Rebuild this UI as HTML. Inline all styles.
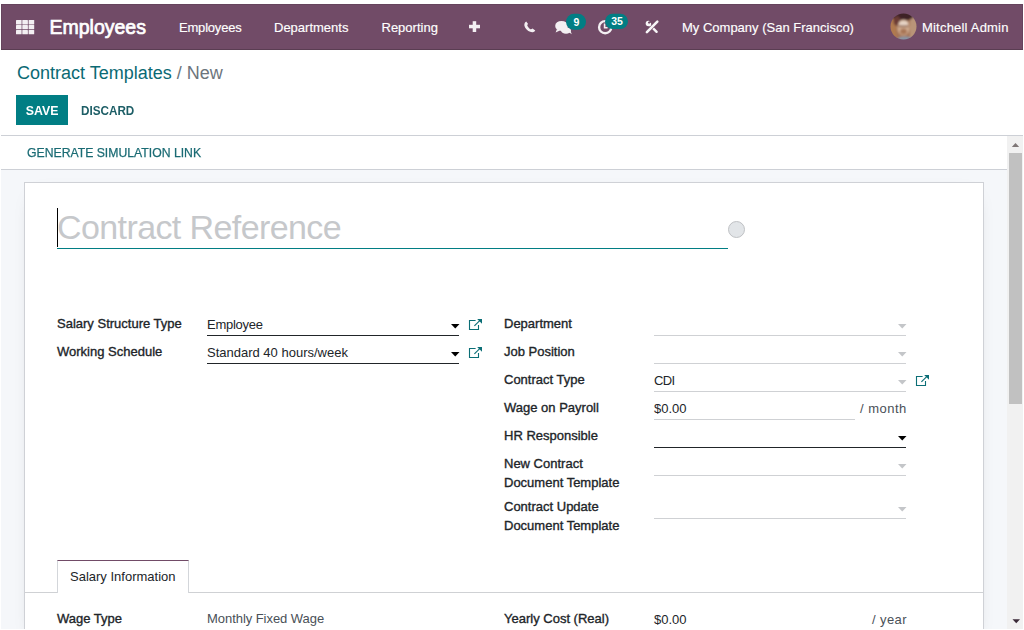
<!DOCTYPE html>
<html><head><meta charset="utf-8">
<style>
*{box-sizing:border-box;margin:0;padding:0}
html,body{width:1024px;height:630px;overflow:hidden;background:#fff;font-family:"Liberation Sans",sans-serif;font-size:13px;color:#212529}
.abs{position:absolute;white-space:nowrap}
#nav{position:absolute;left:1px;top:4px;width:1022px;height:46px;background:#714b67;border-bottom:1px solid #5a3d52;box-shadow:inset 1px 0 0 #66445d, inset -1px 0 0 #66445d, inset 0 1px 0 #66445d}
.nt{color:#fff;font-size:13px;line-height:15px;-webkit-text-stroke:0.15px #fff}
#cp{position:absolute;left:1px;top:50px;width:1022px;height:86px;background:#fff;border-bottom:1px solid #cdd0d6}
#content{position:absolute;left:1px;top:136px;width:1022px;height:493px;background:#f5f7fa;overflow:hidden}
#sb{position:absolute;left:0;top:0;width:1006px;height:34px;background:#fff;border-bottom:1px solid #cdd0d6}
#scroll{position:absolute;left:1006px;top:0;width:16px;height:493px;background:#f1f1f1}
#thumb{position:absolute;left:2px;top:17px;width:13px;height:251px;background:#c1c1c1}
#sheet{position:absolute;left:23px;top:46px;width:960px;height:460px;background:#fff;border:1px solid #cfd1d6;box-shadow:0 5px 20px -15px rgba(0,0,0,.4)}
.lbl{font-weight:400;color:#212529;font-size:13px;-webkit-text-stroke:0.35px #212529}
.val{color:#212529;font-size:13px}
.line{position:absolute;height:1px}
</style></head><body>
<div id="nav">
  <!-- grid icon -->
  <svg class="abs" style="left:15px;top:15.8px" width="19" height="15" viewBox="0 0 19 15"><g fill="#f3eff2"><rect x="0.0" y="0.00" width="5.6" height="4.4" rx="0.5"/><rect x="6.3" y="0.00" width="5.6" height="4.4" rx="0.5"/><rect x="12.6" y="0.00" width="5.6" height="4.4" rx="0.5"/><rect x="0.0" y="4.95" width="5.6" height="4.4" rx="0.5"/><rect x="6.3" y="4.95" width="5.6" height="4.4" rx="0.5"/><rect x="12.6" y="4.95" width="5.6" height="4.4" rx="0.5"/><rect x="0.0" y="9.90" width="5.6" height="4.4" rx="0.5"/><rect x="6.3" y="9.90" width="5.6" height="4.4" rx="0.5"/><rect x="12.6" y="9.90" width="5.6" height="4.4" rx="0.5"/></g></svg>
  <div class="abs nt" style="left:48.5px;top:12.2px;font-size:19.5px;font-weight:400;line-height:22px;letter-spacing:0px;-webkit-text-stroke:0.7px #fff">Employees</div>
  <div class="abs nt" style="left:178px;top:16px;letter-spacing:-0.2px">Employees</div>
  <div class="abs nt" style="left:273px;top:16px">Departments</div>
  <div class="abs nt" style="left:380.5px;top:16px;letter-spacing:0px">Reporting</div>
    <div class="abs nt" style="left:681px;top:16px">My Company (San Francisco)</div>
  <svg class="abs" style="left:889px;top:9px" width="27" height="27" viewBox="0 0 27 27">
    <defs><clipPath id="av"><circle cx="13.5" cy="13.5" r="13"/></clipPath><filter id="bl" x="-20%" y="-20%" width="140%" height="140%"><feGaussianBlur stdDeviation="0.9"/></filter></defs>
    <g clip-path="url(#av)"><g filter="url(#bl)">
      <rect x="-2" y="-2" width="31" height="31" fill="#a57556"/>
      <rect x="-2" y="-2" width="8" height="31" fill="#b07a50"/>
      <rect x="20" y="-2" width="9" height="31" fill="#b99478"/>
      <ellipse cx="12.5" cy="3" rx="11" ry="5" fill="#3c2428"/>
      <ellipse cx="7" cy="8" rx="3.5" ry="5" fill="#6a3a34"/>
      <ellipse cx="13.5" cy="14.5" rx="6" ry="8" fill="#d2ae92"/>
      <ellipse cx="13.5" cy="10.5" rx="4.5" ry="2.5" fill="#e6d4c6"/>
      <rect x="8.5" y="12.5" width="10" height="1.6" fill="#8a6050"/>
      <ellipse cx="13.5" cy="18.5" rx="3.5" ry="3" fill="#a87656"/>
      <ellipse cx="15" cy="27" rx="8" ry="3.5" fill="#8896a6"/>
    </g></g>
  </svg>
  <div class="abs nt" style="left:921px;top:16px;letter-spacing:0.2px">Mitchell Admin</div>
</div>

<!-- nav icons (page coords) -->
<svg class="abs" style="left:0;top:0" width="1024" height="50" viewBox="0 0 1024 50">
  <g fill="#f3eff2">
    <rect x="469" y="24.8" width="11" height="3.5"/>
    <rect x="472.7" y="21.2" width="3.5" height="10.8"/>
  </g>
  <!-- phone -->
  <path d="M526.2 21.6 C524.3 22.8 523.6 25.2 525.2 27.8 C527 30.6 529.8 32.4 532.6 32.2 C534 32.1 535.2 31.2 535.2 30.6 L532.6 28.6 C531.8 29.1 531 29.5 530.4 29.2 C529 28.4 527.8 27 527.3 25.6 C527.1 25 527.6 24.4 528.1 24 Z" fill="#f3eff2"/>
  <!-- chat -->
  <ellipse cx="561.5" cy="25.9" rx="6.3" ry="5" fill="#f3eff2"/>
  <path d="M557 29 L555.6 32.4 L560 30.5 Z" fill="#f3eff2"/>
  <ellipse cx="566" cy="30.5" rx="5" ry="3.3" fill="#f3eff2"/>
  <path d="M568.5 32 L571.8 34.2 L570.5 30.8 Z" fill="#f3eff2"/>
  <!-- clock -->
  <circle cx="605.2" cy="27.2" r="6.1" fill="none" stroke="#f3eff2" stroke-width="2.4"/>
  <path d="M604.6 23.6 V27.8 H607.6" fill="none" stroke="#f3eff2" stroke-width="1.6"/>
  <!-- tools -->
  <path d="M649.5 24.6 L656.6 31.8" stroke="#f7f5f7" stroke-width="2.4" stroke-linecap="round"/>
  <circle cx="648.4" cy="23.5" r="2.7" fill="#f7f5f7"/>
  <circle cx="649.1" cy="22.6" r="1.15" fill="#714b67"/>
  <path d="M649.2 21.6 L650.6 20.2 L652.4 22 L650.2 23 Z" fill="#714b67"/>
  <path d="M646.9 32.1 L657.3 21.7" stroke="#714b67" stroke-width="3.6" stroke-linecap="butt"/>
  <path d="M646.9 32.1 L657.3 21.7" stroke="#f7f5f7" stroke-width="2.6" stroke-linecap="round"/>
  <!-- badges -->
  <rect x="566" y="13.8" width="20" height="16" rx="8" fill="#017e84"/>
  <rect x="605" y="13.8" width="23" height="15.2" rx="7.6" fill="#017e84"/>
</svg>
<div class="abs" style="left:566.5px;top:14.3px;width:20px;height:16px;line-height:16px;text-align:center;color:#fff;font-size:10.5px;font-weight:700">9</div>
<div class="abs" style="left:605.5px;top:13.1px;width:23px;height:16px;line-height:16px;text-align:center;color:#fff;font-size:10.5px;font-weight:700">35</div>
<div id="cp">
  <div class="abs" style="left:16px;top:12px;font-size:18px;line-height:22px;color:#0b6a74">Contract Templates <span style="color:#6c757d">/ New</span></div>
  <div class="abs" style="left:15px;top:45px;width:52px;height:30px;background:#017e84;color:#fff;font-weight:700;font-size:13px;line-height:31px;text-align:center"><span style="display:inline-block;transform:scaleX(0.95)">SAVE</span></div>
  <div class="abs" style="left:80px;top:45px;height:30px;color:#1d5e66;font-weight:700;font-size:13px;line-height:31px;transform:scaleX(0.9);transform-origin:0 0">DISCARD</div>
</div>
<div id="content">
  <div id="sb">
    <div class="abs" style="left:25.5px;top:9px;color:#1a6b74;font-size:13px;line-height:15px;transform:scaleX(0.94);transform-origin:0 0;-webkit-text-stroke:0.25px #1a6b74">GENERATE SIMULATION LINK</div>
  </div>
  <div id="sheet">
  </div>
  <div id="scroll"><div id="thumb"></div>
    <svg class="abs" style="left:4px;top:6px" width="9" height="6"><path d="M0.8 5H8.2L4.5 1Z" fill="#7f7777"/></svg>
    <svg class="abs" style="left:5px;top:483px" width="9" height="6"><path d="M0.5 0.2H8L4.25 4.2Z" fill="#3b2a38"/></svg>
  </div>
</div>

<!-- FORM (page coordinates) -->
<div id="form" style="position:absolute;left:0;top:0;width:1024px;height:630px;pointer-events:none">
  <div class="abs" style="left:57px;top:207px;font-size:34px;line-height:40px;color:#c6c8cb;letter-spacing:-0.6px">Contract Reference</div>
  <div class="abs" style="left:57px;top:208px;width:1px;height:39px;background:#000"></div>
  <div class="line" style="left:57px;top:248px;width:671px;height:1px;background:#017e84"></div>
  <div class="abs" style="left:728px;top:221px;width:17px;height:17px;border-radius:50%;background:#e2e5e8;border:1.5px solid #bfc1c4"></div>

  <div class="abs lbl" style="left:57px;top:316px">Salary Structure Type</div>
  <div class="abs lbl" style="left:57px;top:344px">Working Schedule</div>
  <div class="abs val" style="left:207px;top:317px;letter-spacing:-0.25px">Employee</div>
  <div class="abs val" style="left:207px;top:345px">Standard 40 hours/week</div>
  <div class="line" style="left:207px;top:335px;width:252px;background:#212529"></div>
  <div class="line" style="left:207px;top:363px;width:252px;background:#212529"></div>
  <svg class="abs" style="left:451px;top:324px" width="9" height="5"><path d="M0 0H8.5L4.25 4.5Z" fill="#000"/></svg>
  <svg class="abs" style="left:451px;top:352px" width="9" height="5"><path d="M0 0H8.5L4.25 4.5Z" fill="#000"/></svg>
  <svg class="abs ext" style="left:468px;top:318px" width="15" height="13" viewBox="0 0 15 13"><g fill="none" stroke="#0b6e76" stroke-width="1.1"><path d="M7.6 2.5H1.5V11.5H10.5V7"/><path d="M6.4 7.9L12 2.3"/></g><path d="M9.2 1H14V5.8Z" fill="#0b6e76"/></svg>
  <svg class="abs ext" style="left:468px;top:346px" width="15" height="13" viewBox="0 0 15 13"><g fill="none" stroke="#0b6e76" stroke-width="1.1"><path d="M7.6 2.5H1.5V11.5H10.5V7"/><path d="M6.4 7.9L12 2.3"/></g><path d="M9.2 1H14V5.8Z" fill="#0b6e76"/></svg>

  <div class="abs lbl" style="left:504px;top:316px">Department</div>
  <div class="abs lbl" style="left:504px;top:344px">Job Position</div>
  <div class="abs lbl" style="left:504px;top:372px">Contract Type</div>
  <div class="abs lbl" style="left:504px;top:400px">Wage on Payroll</div>
  <div class="abs lbl" style="left:504px;top:428px">HR Responsible</div>
  <div class="abs lbl" style="left:504px;top:456px">New Contract</div>
  <div class="abs lbl" style="left:504px;top:475px">Document Template</div>
  <div class="abs lbl" style="left:504px;top:499px">Contract Update</div>
  <div class="abs lbl" style="left:504px;top:518px">Document Template</div>

  <div class="line" style="left:654px;top:335px;width:252px;background:#cfd1d4"></div>
  <div class="line" style="left:654px;top:363px;width:252px;background:#cfd1d4"></div>
  <div class="line" style="left:654px;top:391px;width:252px;background:#cfd1d4"></div>
  <div class="line" style="left:654px;top:419px;width:201px;background:#cfd1d4"></div>
  <div class="line" style="left:654px;top:447px;width:252px;background:#212529"></div>
  <div class="line" style="left:654px;top:475px;width:252px;background:#cfd1d4"></div>
  <div class="line" style="left:654px;top:518px;width:252px;background:#cfd1d4"></div>
  <svg class="abs" style="left:898px;top:324px" width="9" height="5"><path d="M0 0H8.5L4.25 4.5Z" fill="#c4c6c9"/></svg>
  <svg class="abs" style="left:898px;top:352px" width="9" height="5"><path d="M0 0H8.5L4.25 4.5Z" fill="#c4c6c9"/></svg>
  <svg class="abs" style="left:898px;top:380px" width="9" height="5"><path d="M0 0H8.5L4.25 4.5Z" fill="#c4c6c9"/></svg>
  <svg class="abs" style="left:898px;top:436px" width="9" height="5"><path d="M0 0H8.5L4.25 4.5Z" fill="#000"/></svg>
  <svg class="abs" style="left:898px;top:464px" width="9" height="5"><path d="M0 0H8.5L4.25 4.5Z" fill="#c4c6c9"/></svg>
  <svg class="abs" style="left:898px;top:507px" width="9" height="5"><path d="M0 0H8.5L4.25 4.5Z" fill="#c4c6c9"/></svg>
  <div class="abs val" style="left:654px;top:373px;letter-spacing:-0.7px">CDI</div>
  <div class="abs val" style="left:654px;top:401px">$0.00</div>
  <div class="abs val" style="left:860px;top:401px;color:#495057;letter-spacing:0.5px">/ month</div>
  <svg class="abs ext" style="left:915px;top:374px" width="15" height="13" viewBox="0 0 15 13"><g fill="none" stroke="#0b6e76" stroke-width="1.1"><path d="M7.6 2.5H1.5V11.5H10.5V7"/><path d="M6.4 7.9L12 2.3"/></g><path d="M9.2 1H14V5.8Z" fill="#0b6e76"/></svg>

  <!-- notebook -->
  <div class="line" style="left:25px;top:592px;width:958px;background:#cfd1d4"></div>
  <div class="abs" style="left:57px;top:560px;width:132px;height:33px;background:#fff;border:1px solid #d3d6da;border-top-color:#714b67;border-bottom:none"></div>
  <div class="abs val" style="left:70px;top:569px">Salary Information</div>
  <div class="abs lbl" style="left:57px;top:611px">Wage Type</div>
  <div class="abs val" style="left:207px;top:611px;color:#495057;letter-spacing:-0.05px">Monthly Fixed Wage</div>
  <div class="abs lbl" style="left:504px;top:611px">Yearly Cost (Real)</div>
  <div class="abs val" style="left:654px;top:612px">$0.00</div>
  <div class="abs val" style="left:872px;top:612px;color:#495057;letter-spacing:0.4px">/ year</div>
</div>
</body></html>
